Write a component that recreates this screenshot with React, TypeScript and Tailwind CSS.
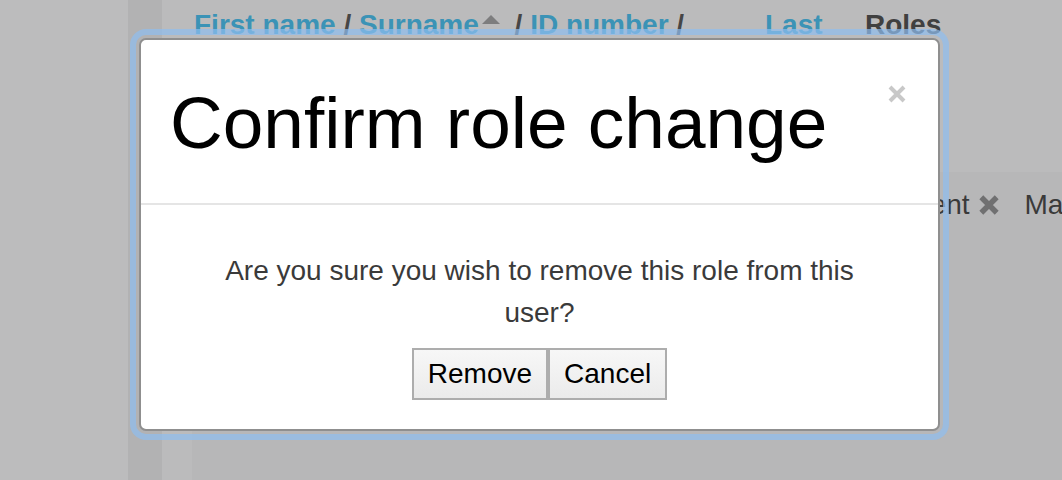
import React from "react"

function CrossIcon({ className, stroke }: { className: string; stroke: number }): JSX.Element {
  return (
    <svg viewBox="0 0 20 20" fill="none" className={className} xmlns="http://www.w3.org/2000/svg">
      <path d="M3 3 L17 17 M17 3 L3 17" stroke="currentColor" strokeWidth={stroke} strokeLinecap="butt" />
    </svg>
  )
}

function BackgroundPage(): JSX.Element {
  return (
    <div className="flex h-full">
      <div className="w-[128px] shrink-0 bg-[#bcbcbd]" />
      <div className="w-[34px] shrink-0 bg-[#b2b2b3]" />
      <div className="w-[30px] shrink-0 bg-[#bbbbbc]" />
      <div className="flex min-w-0 flex-1 flex-col">
        <div className="h-[172px] bg-[#bbbbbc] pl-[2px] pt-[9px]">
          <div className="flex whitespace-nowrap text-[28px] font-bold leading-[32px]">
            <div className="w-[571px] shrink-0">
              <span className="text-[#3b93b6]">First name</span>
              <span className="text-[#464646]"> / </span>
              <span className="text-[#3b93b6]">Surname</span>
              <svg viewBox="0 0 18 9" className="mb-[14px] ml-[3px] mr-[7px] inline-block h-[9px] w-[18px] align-middle">
                <path d="M0 9 L9 0 L18 9 Z" fill="#7d7d7e" />
              </svg>
              <span className="text-[#464646]"> / </span>
              <span className="text-[#3b93b6]">ID number</span>
              <span className="text-[#464646]"> /</span>
            </div>
            <div className="w-[100px] shrink-0 text-[#3b93b6]">Last</div>
            <div className="text-[#404040]">Roles</div>
          </div>
        </div>
        <div className="flex-1 bg-[#b7b7b8]">
          <div className="-mt-[1px] flex items-center whitespace-nowrap pl-[681px] text-[28px] leading-[32px] text-[#3a3a3a]">
            <span className="mt-[18px] shrink-0">Student</span>
            <CrossIcon className="ml-[8px] mt-[18px] h-[22px] w-[22px] shrink-0 text-[#707071]" stroke={5} />
            <span className="ml-[25px] mt-[18px] shrink-0">Manager</span>
          </div>
        </div>
      </div>
    </div>
  )
}

function ConfirmDialog(): JSX.Element {
  return (
    <div className="absolute left-[139px] top-[38px] h-[393px] w-[801px] rounded-[7px] border-2 border-[#8f8f8f] bg-white outline-[6px] outline-offset-[3px] outline-[#8ebdef]/70">
      <div className="relative border-b-2 border-[#e5e5e5] px-[29px] pb-[41px] pt-[43px]">
        <h2 className="whitespace-nowrap text-[73px] font-normal leading-[79px] text-black">Confirm role change</h2>
        <button type="button" aria-label="Close" className="absolute right-[31px] top-[44px] text-[#c8c8c8]">
          <CrossIcon className="h-[20px] w-[20px]" stroke={4} />
        </button>
      </div>
      <div className="px-[60px] pt-[45px] text-center">
        <p className="text-[28px] leading-[42px] text-[#3a3a3a]">
          Are you sure you wish to remove this role from this user?
        </p>
        <div className="mt-[14px] flex justify-center">
          <button type="button" className="border-2 border-[#adadad] bg-gradient-to-b from-[#f7f7f7] to-[#ebebeb] px-[14px] py-[8px] text-[28px] leading-[32px] text-black">
            Remove
          </button>
          <button type="button" className="border-2 border-[#adadad] bg-gradient-to-b from-[#f7f7f7] to-[#ebebeb] px-[14px] py-[8px] text-[28px] leading-[32px] text-black">
            Cancel
          </button>
        </div>
      </div>
    </div>
  )
}

export default function App(): JSX.Element {
  return (
    <div className="relative h-[480px] w-[1062px] overflow-hidden bg-[#bcbcbd] font-['Liberation_Sans',Arial,sans-serif]">
      <BackgroundPage />
      <ConfirmDialog />
    </div>
  )
}
